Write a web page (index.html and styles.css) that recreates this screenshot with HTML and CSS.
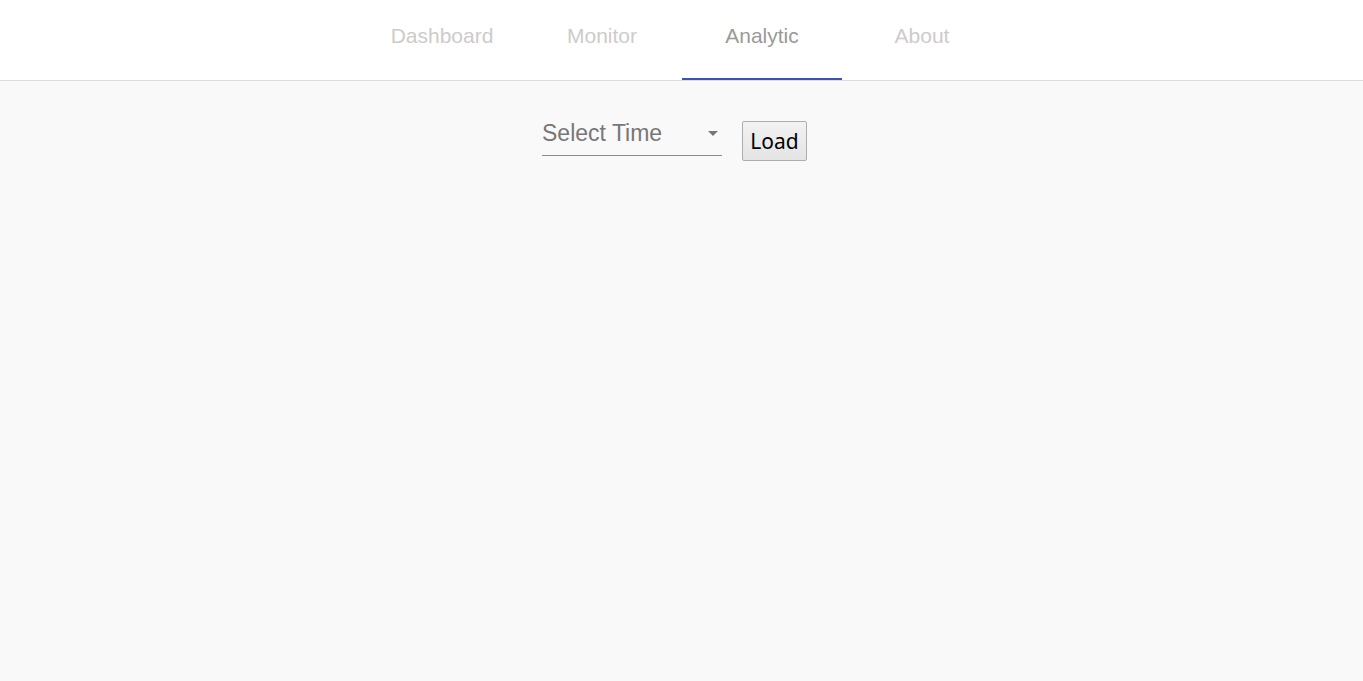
FILE: index.html
```html
<!DOCTYPE html>
<html>
<head>
<meta charset="utf-8">
<link rel="stylesheet" href="styles.css">
</head>
<body>
<header class="topbar">
  <nav class="tabs">
    <a class="tab">Dashboard</a>
    <a class="tab">Monitor</a>
    <a class="tab active">Analytic</a>
    <a class="tab">About</a>
  </nav>
</header>
<main class="content">
  <div class="controls">
    <div class="select">
      <span class="select-label">Select Time</span>
      <span class="caret"></span>
    </div>
    <button class="load">Load</button>
  </div>
</main>
</body>
</html>
```
FILE: styles.css
```css
html, body {
  margin: 0;
  height: 100%;
}
body {
  background: #f9f9f9;
  font-family: "Liberation Sans", Arial, sans-serif;
}
.topbar {
  background: #fff;
  height: 80px;
  border-bottom: 1px solid #dcdcdc;
  display: flex;
  justify-content: center;
}
.tabs {
  display: flex;
  padding-left: 1px;
}
.tab {
  width: 160px;
  height: 80px;
  box-sizing: border-box;
  display: flex;
  justify-content: center;
  padding-top: 23px;
  font-size: 21px;
  line-height: 26px;
  color: #cdcbcb;
  border-bottom: 2px solid transparent;
}
.tab.active {
  color: #9a9a9a;
  border-bottom-color: #3f51b5;
}
.content {
  display: flex;
  justify-content: center;
  padding-right: 14px;
}
.controls {
  display: flex;
  align-items: flex-start;
  gap: 20px;
  padding-top: 35px;
}
.select {
  width: 180px;
  height: 40px;
  box-sizing: border-box;
  border-bottom: 1px solid #8c8c8c;
  display: flex;
  align-items: flex-start;
  justify-content: space-between;
  padding-top: 4px;
}
.select-label {
  font-size: 23px;
  line-height: 26px;
  color: #777;
}
.caret {
  width: 0;
  height: 0;
  border-left: 5px solid transparent;
  border-right: 5px solid transparent;
  border-top: 5px solid #777;
  margin-top: 11px;
  margin-right: 4px;
}
.load {
  margin-top: 5px;
  width: 65px;
  height: 40px;
  padding: 0;
  border: 1px solid #adadad;
  border-radius: 2px;
  background: linear-gradient(#f2f2f2, #e4e4e4);
  font-family: "Noto Sans", "Open Sans", sans-serif;
  font-size: 21px;
  color: #000;
  line-height: 26px;
}
```
